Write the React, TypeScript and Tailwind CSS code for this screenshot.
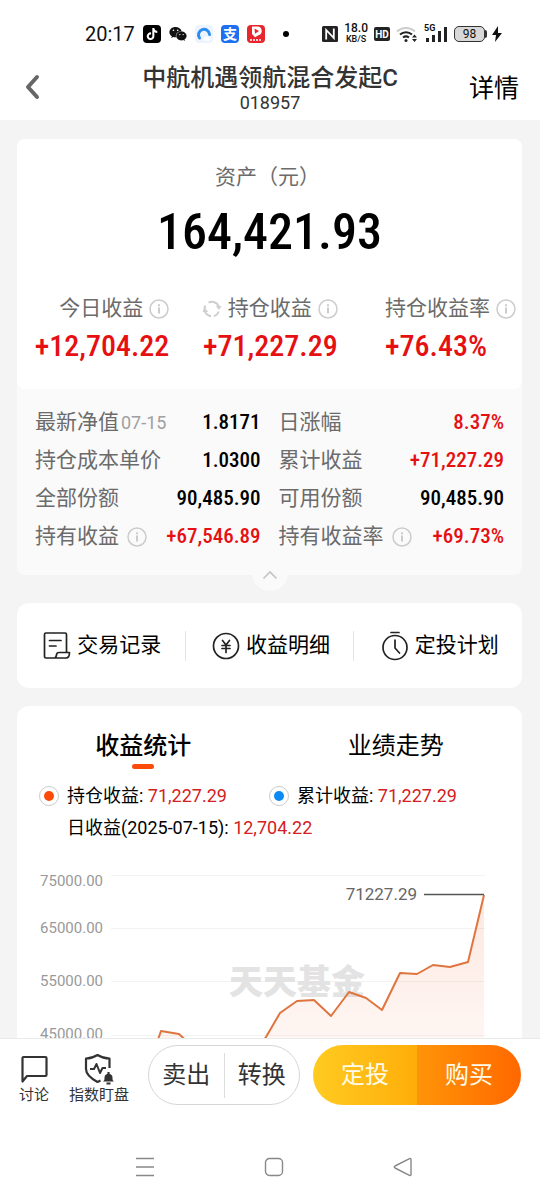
import type { ReactNode } from "react";
import { FaTiktok, FaWeixin } from "react-icons/fa";

function Info() {
  return (
    <svg viewBox="0 0 20 20" className="size-5 shrink-0" fill="none" stroke="#cccccc" aria-hidden="true">
      <circle cx="10" cy="10" r="9" strokeWidth="1.5" />
      <path d="M10 8.5V14.500" strokeWidth="2" />
      <path d="M10 5.2V7.200" strokeWidth="2" />
    </svg>
  );
}

function Refresh() {
  return (
    <svg viewBox="0 0 20 20" className="size-5 shrink-0" fill="none" stroke="#cfcfcf" strokeWidth="2" aria-hidden="true">
      <path d="M9 17.300A7.300 7.300 0 0 1 3.400 6.500M6.500 3.700A7.300 7.300 0 0 1 16.800 7.500M16.800 12.500a7.300 7.300 0 0 1-5 4.600" />
      <path d="M13.800 7h5.700L17 11ZM.500 13H6.200L3 9Z" fill="#cfcfcf" stroke="none" />
    </svg>
  );
}

function StatusBar() {
  return (
    <div className="flex h-[68px] items-center pr-[37px] pl-[85px] text-[#111111]">
      <span className="w-[58px] text-xl">20:17</span>
      <div className="flex flex-1 items-center gap-2">
        <span className="flex size-[18px] items-center justify-center rounded bg-black text-white">
          <FaTiktok size={12} />
        </span>
        <FaWeixin size={18} />
        <svg viewBox="0 0 18 18" className="size-[18px]" aria-hidden="true">
          <rect width="18" height="18" rx="4" fill="#edf4fb" />
          <path d="M4.500 13A5.500 5.500 0 1 1 14.500 9.500" fill="none" stroke="#2a8df0" strokeWidth="3" strokeLinecap="round" />
          <path d="M8 15.500c0-4 5-5 6-2 3 0 2 2 0 2H8Z" fill="#ffffff" />
        </svg>
        <span className="flex size-[18px] items-center justify-center rounded bg-[#1f70f0] text-sm leading-none font-bold text-white">支</span>
        <svg viewBox="0 0 18 18" className="size-[18px]" aria-hidden="true">
          <rect width="18" height="18" rx="4" fill="#e7272d" />
          <path d="M5 1.500h5.500a4.500 4.500 0 0 1 1 8.800l-3.500 2L5 9Z" fill="#ffffff" />
          <path d="M7.500 3.500l4.500 2.500-4 2.800Z" fill="#e7272d" />
          <path d="M3 15h12" stroke="#ffffff" strokeWidth="1.500" strokeDasharray="2 1" />
        </svg>
        <span className="ml-[10px] size-[6px] rounded-full bg-black" />
      </div>
      <div className="flex items-center gap-[6px]">
        <svg viewBox="0 0 16 16" className="size-4" aria-hidden="true">
          <rect width="16" height="16" rx="1.500" fill="#222222" />
          <path d="M4.200 13.500V4l7.600 8V2.500" fill="none" stroke="#ffffff" strokeWidth="1.800" />
        </svg>
        <span className="flex flex-col items-center font-medium">
          <span className="text-xs leading-[11px]">18.0</span>
          <span className="text-[9px] leading-[11px]">KB/S</span>
        </span>
        <span className="flex h-[14px] w-4 items-center justify-center rounded-xs bg-[#222222] text-[10px] font-bold text-white">HD</span>
        <svg viewBox="0 0 22 18" className="h-[18px] w-[22px]" fill="none" strokeWidth="2" aria-hidden="true">
          <path d="M1 6.500a13 13 0 0 1 18 0" stroke="#cccccc" />
          <path d="M4 9.500a9 9 0 0 1 12 0M7 12.500a5 5 0 0 1 6 0" stroke="#222222" />
          <circle cx="10" cy="15.500" r="1.500" fill="#222222" />
          <path d="M16 12.500l2.500-3 2.500 3ZM16 14l2.500 3 2.500-3Z" fill="#222222" />
        </svg>
        <span className="relative h-[18px] w-6">
          <span className="absolute -top-px left-0 text-[9px] leading-[9px] font-bold">5G</span>
          <svg viewBox="0 0 24 18" className="size-full" fill="#222222" aria-hidden="true">
            <path d="M2 13h3v4H2ZM8 10h3v7H8ZM14 6h3v11h-3ZM20 2h3v15h-3Z" />
          </svg>
        </span>
        <span className="flex items-center">
          <span className="flex h-4 w-[31px] items-center justify-center rounded-[5px] border border-[#333333] bg-[#d8d8d8] text-xs leading-none">98</span>
          <span className="h-2 w-[2px] rounded-r bg-[#333333]" />
          <svg viewBox="0 0 12 16" className="ml-1 h-4 w-3" fill="#111111" aria-hidden="true">
            <path d="M7 0L1 9h4l-1 7 7-9H7Z" />
          </svg>
        </span>
      </div>
    </div>
  );
}

const numeric = "font-['Roboto_Condensed','Roboto',sans-serif] font-medium";

function Detail({ label, note, info, value, red }: { label: string; note?: string; info?: boolean; value: string; red?: boolean }) {
  return (
    <div className="flex h-[38px] items-center">
      <dt className="flex items-center text-[21px] text-[#6b6b6b]">
        {label}
        {note && <span className="ml-[2px] text-lg text-[#a0a0a0]">{note}</span>}
        {info && <span className="ml-2"><Info /></span>}
      </dt>
      <dd className={`${numeric} ml-auto text-[21px] ${red ? "text-[#e60f12]" : "text-black"}`}>{value}</dd>
    </div>
  );
}

function Summary({ label, value, wide, refresh }: { label: string; value: string; wide?: boolean; refresh?: boolean }) {
  return (
    <div className={wide ? "flex flex-col items-end pr-[6px]" : "flex flex-col items-end pr-4"}>
      <div className="flex h-8 items-center gap-[6px] text-[21px] whitespace-nowrap text-[#6b6b6b]">
        {refresh && <Refresh />}
        {label}
        <Info />
      </div>
      <div className={`${numeric} text-[30px] leading-[42px] text-[#e60f12] ${wide ? "pr-[29px]" : ""}`}>{value}</div>
    </div>
  );
}

function Shortcut({ label, children }: { label: string; children: ReactNode }) {
  return (
    <button type="button" className="flex h-[30px] flex-1 items-center justify-center gap-[6px] pl-[3px] text-[21px] whitespace-nowrap text-black">
      <svg viewBox="0 0 28 30" className="h-[30px] w-7" fill="none" stroke="#222222" strokeWidth="1.700" strokeLinejoin="round" strokeLinecap="round" aria-hidden="true">
        {children}
      </svg>
      {label}
    </button>
  );
}

function Legend({ label, value, dot }: { label: string; value: string; dot: string }) {
  return (
    <div className="flex w-[230px] items-center gap-2">
      <span className="flex size-5 items-center justify-center rounded-full border border-[#cccccc]">
        <span className={`size-[10px] rounded-full ${dot}`} />
      </span>
      <span className="whitespace-nowrap">
        {label}: <span className="text-[#d42020]">{value}</span>
      </span>
    </div>
  );
}

const series: [number, number][] = [
  [111, 225], [127, 213], [136, 195], [144, 172], [162, 175], [178, 190], [196, 205], [213, 213], [230, 205],
  [249, 178], [263, 154], [280, 142], [297, 141], [314, 157], [332, 133], [349, 139], [365, 151],
  [383, 114], [400, 115], [416, 106], [433, 108], [451, 103], [467, 36],
];

function Chart() {
  const line = series.map(([x, y]) => `${x},${y}`).join(" ");
  const ticks: [string, number, number][] = [["75000.00", 16, 27], ["65000.00", 69, 74], ["55000.00", 122, 127], ["45000.00", 176, 180]];
  return (
    <svg viewBox="0 0 505 240" className="mt-[15px] w-full" role="img" aria-label="收益统计">
      <defs>
        <linearGradient id="area" x1="0" y1="0" x2="0" y2="1">
          <stop offset="0" stopColor="#f26b3a" stopOpacity="0.16" />
          <stop offset="1" stopColor="#f26b3a" stopOpacity="0.02" />
        </linearGradient>
      </defs>
      {ticks.map(([label, grid, base]) => (
        <g key={label}>
          <path d={`M94 ${grid}.5H468`} stroke="#f3f3f3" />
          <text x="86" y={base} textAnchor="end" fontSize="15" fill="#999999">{label}</text>
        </g>
      ))}
      <text x="212" y="135" fontSize="34" fontWeight="900" fill="#e3e3e3">天天基金</text>
      <polygon points={`${line} 467,240 111,240`} fill="url(#area)" />
      <polyline points={line} fill="none" stroke="#e0743f" strokeWidth="2" strokeLinejoin="round" />
      <path d="M407 35.500H467" stroke="#555555" strokeWidth="1.300" />
      <text x="400" y="41" textAnchor="end" fontSize="17" fill="#666666">71227.29</text>
    </svg>
  );
}

export default function App() {
  return (
    <div className="flex h-screen flex-col bg-[#f4f4f4] font-['Roboto','Noto_Sans_CJK_SC',sans-serif] text-black">
      <header className="shrink-0 bg-white pb-2">
        <StatusBar />
        <div className="-mt-2 grid grid-cols-[90px_1fr_90px] items-center">
          <button type="button" aria-label="返回" className="mt-[2px] pl-6">
            <svg viewBox="0 0 18 28" className="h-7 w-[18px]" fill="none" stroke="#666666" strokeWidth="4" strokeLinecap="round" strokeLinejoin="round" aria-hidden="true">
              <path d="M13 4L4 14l9 10" />
            </svg>
          </button>
          <div className="pt-[2px] text-center text-[#333333]">
            <h1 className="text-2xl leading-8 font-medium whitespace-nowrap">中航机遇领航混合发起C</h1>
            <p className="text-lg leading-[18px]">018957</p>
          </div>
          <button type="button" className="pt-[6px] pr-[21px] text-right text-[25px]">详情</button>
        </div>
      </header>

      <main className="min-h-0 flex-1 overflow-y-auto pt-[19px] pr-[18px] pl-[17px] [scrollbar-width:none]">
        <section className="relative rounded-lg bg-[#fafafa]">
          <div className="rounded-lg bg-white pt-5 pb-[22px]">
            <p className="pr-1 text-center text-[21px] leading-9 text-[#6b6b6b]">资产（元）</p>
            <p className={`${numeric} text-center text-[50px] leading-[74px]`}>164,421.93</p>
            <div className="grid grid-cols-3 pt-6">
              <Summary label="今日收益" value="+12,704.22" />
              <Summary label="持仓收益" value="+71,227.29" refresh />
              <Summary label="持仓收益率" value="+76.43%" wide />
            </div>
          </div>
          <dl className="grid grid-cols-2 gap-x-[18px] px-[18px] pt-[15px] pb-[19px]">
            <Detail label="最新净值" note="07-15" value="1.8171" />
            <Detail label="日涨幅" value="8.37%" red />
            <Detail label="持仓成本单价" value="1.0300" />
            <Detail label="累计收益" value="+71,227.29" red />
            <Detail label="全部份额" value="90,485.90" />
            <Detail label="可用份额" value="90,485.90" />
            <Detail label="持有收益" info value="+67,546.89" red />
            <Detail label="持有收益率" info value="+69.73%" red />
          </dl>
          <button type="button" aria-label="收起" className="absolute -bottom-4 left-1/2 flex size-9 -translate-x-1/2 items-center justify-center rounded-full bg-[#fafafa] pt-1">
            <svg viewBox="0 0 16 10" className="h-[10px] w-4" fill="none" stroke="#c4c4c4" strokeWidth="1.700" aria-hidden="true">
              <path d="M1.500 8.500L8 2l6.500 6.500" />
            </svg>
          </button>
        </section>

        <nav className="mt-7 flex h-[85px] items-center divide-x divide-[#e5e5e5] rounded-xl bg-white">
          <Shortcut label="交易记录">
            <path d="M23.500 21.500V3.500a1.500 1.500 0 0 0-1.500-1.500H3a1.500 1.500 0 0 0-1.500 1.500v22A1.500 1.500 0 0 0 3 27h20c2 0 3.500-2 3.500-5.500H16c-1 0-2 0-2.300 1.500C13.400 25 12.500 27 11.500 27M6.500 9.500H18M6.500 15h6.500" />
          </Shortcut>
          <Shortcut label="收益明细">
            <circle cx="14" cy="15" r="12.500" />
            <path d="M10.500 9.500l3.500 4.500 3.500-4.500M14 14v7.500M10 14.500h8M10 17.500h8" />
          </Shortcut>
          <Shortcut label="定投计划">
            <circle cx="14" cy="16.500" r="12" />
            <path d="M10 1.500h8M14 9v8l4.500 5" />
          </Shortcut>
        </nav>

        <section className="mt-[18px] rounded-t-xl bg-white pt-[22px]">
          <div className="grid grid-cols-2 text-2xl leading-9" role="tablist">
            <button type="button" role="tab" aria-selected="true" className="flex flex-col items-center font-medium">
              收益统计
              <span className="h-[5px] w-[22px] rounded-full bg-[#fb4a0a]" />
            </button>
            <button type="button" role="tab" aria-selected="false" className="flex flex-col items-center">业绩走势</button>
          </div>
          <div className="pt-[11px] pl-[22px] text-lg leading-8">
            <div className="flex">
              <Legend label="持仓收益" value="71,227.29" dot="bg-[#fb4a0a]" />
              <Legend label="累计收益" value="71,227.29" dot="bg-[#0c8af5]" />
            </div>
            <p className="pl-7">日收益(2025-07-15): <span className="text-[#d42020]">12,704.22</span></p>
          </div>
          <Chart />
        </section>
      </main>

      <footer className="shrink-0 border-t border-[#eaeaea] bg-white">
        <div className="flex items-end pt-[6px] pr-[19px] pl-[14px] text-[#333333]">
          <button type="button" className="flex w-10 flex-col items-center text-[15px] leading-5">
            <svg viewBox="0 0 28 30" className="h-[30px] w-7" fill="none" stroke="#333333" strokeWidth="2.200" strokeLinejoin="round" aria-hidden="true">
              <path d="M2.500 26.500V3a1 1 0 0 1 1-1h22a1 1 0 0 1 1 1v17a1 1 0 0 1-1 1H7Z" />
            </svg>
            讨论
          </button>
          <button type="button" className="ml-[15px] flex w-[60px] flex-col items-center text-[15px] leading-5 whitespace-nowrap">
            <svg viewBox="0 0 30 32" className="h-8 w-[30px]" fill="none" stroke="#333333" strokeWidth="2.200" strokeLinejoin="round" aria-hidden="true">
              <path d="M25.500 15V5.500c-4 0-8-1-12-3.500C9.500 4.500 6 5.500 2 5.500V16c0 6 6 10 11.500 13l3-1.500" />
              <path d="M6 16h4l2.500-5 3.500 9 2.500-5H22" strokeWidth="2" />
              <path d="M19 28.500c1.500-1 1.500-2 1.500-4 0-5 8-5 8 0 0 2 0 3 1.500 4ZM22.500 29.500h4V31.500h-4Z" fill="#333333" stroke="none" />
              <path d="M24.500 19v3" />
            </svg>
            指数盯盘
          </button>
          <div className="ml-[19px] flex h-[60px] w-[152px] items-center rounded-full border border-[#d6d6d6] text-2xl">
            <button type="button" className="flex-1 whitespace-nowrap">卖出</button>
            <span className="h-[45px] w-px bg-[#dddddd]" />
            <button type="button" className="flex-1 whitespace-nowrap">转换</button>
          </div>
          <div className="ml-[13px] flex h-[60px] flex-1 overflow-hidden rounded-full text-2xl text-[#fffbe8]">
            <button type="button" className="flex-1 bg-linear-to-r from-[#ffcb20] to-[#ffad08]">定投</button>
            <button type="button" className="flex-1 bg-linear-to-r from-[#ff9408] to-[#ff6700]">购买</button>
          </div>
        </div>
        <div className="grid grid-cols-3 justify-items-center pt-[52px] pr-[72px] pb-[23px] pl-20">
          <button type="button" aria-label="菜单">
            <svg viewBox="0 0 20 20" className="size-5" stroke="#888888" strokeWidth="1.300" aria-hidden="true">
              <path d="M1 1.500h18M1 10h18M1 18.500h18" />
            </svg>
          </button>
          <button type="button" aria-label="主屏幕">
            <svg viewBox="0 0 20 20" className="size-5" fill="none" stroke="#888888" strokeWidth="1.400" aria-hidden="true">
              <rect x="1.500" y="1.500" width="17" height="17" rx="4" />
            </svg>
          </button>
          <button type="button" aria-label="后退">
            <svg viewBox="0 0 20 20" className="size-5" fill="none" stroke="#888888" strokeWidth="1.400" strokeLinejoin="round" aria-hidden="true">
              <path d="M18 2.500v15c0 1-.7 1.200-1.500.8L2 11q-1.500-1 0-2L16.500 1.700c.8-.4 1.500-.2 1.500.8Z" />
            </svg>
          </button>
        </div>
      </footer>
    </div>
  );
}
